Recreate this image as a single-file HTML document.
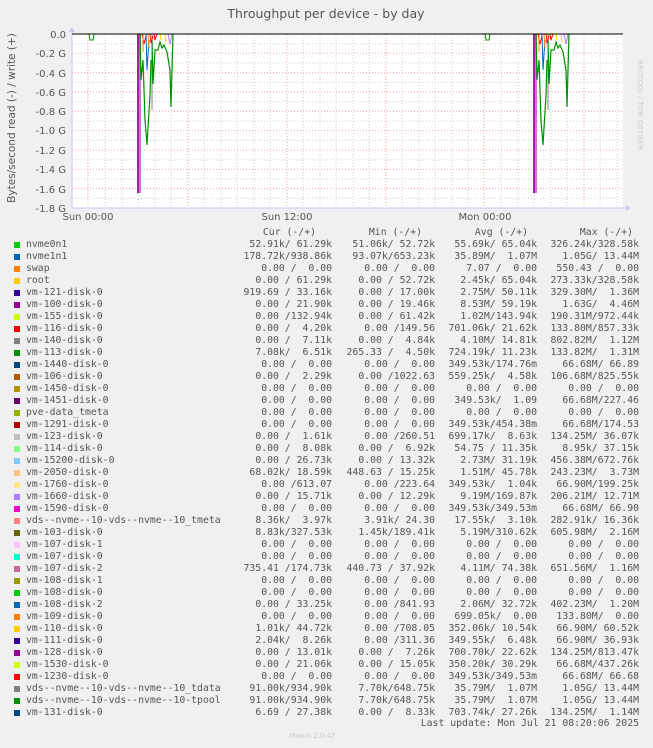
<!DOCTYPE html>
<html><head><meta charset="utf-8"><style>
*{margin:0;padding:0}
body{width:653px;height:748px;background:#f0f0f0;position:relative;overflow:hidden;font-family:"DejaVu Sans Mono","Liberation Mono",monospace;color:#555}
.t{position:absolute;font-size:9.8px;line-height:12px;white-space:pre}
.r{text-align:right}
.sq{position:absolute;width:6px;height:6px}
</style></head><body>
<svg width="653" height="230" style="position:absolute;left:0;top:0" font-family="DejaVu Sans, Liberation Sans, sans-serif">
<text x="326" y="18" text-anchor="middle" font-size="12.5" fill="#555">Throughput per device - by day</text>
<text transform="translate(15,118) rotate(-90)" text-anchor="middle" font-size="10.5" fill="#555">Bytes/second read (-) / write (+)</text>
<text transform="translate(638,105) rotate(90)" text-anchor="middle" font-size="7" fill="#ccc">RRDTOOL / TOBI OETIKER</text>
<rect x="72" y="34" width="551" height="174" fill="#fff"/>
<g stroke="#ccc" stroke-dasharray="1,2" stroke-width="1">
<path d="M105 34V208M122 34V208M138 34V208M155 34V208M171 34V208M204 34V208M221 34V208M237 34V208M254 34V208M270 34V208M303 34V208M320 34V208M336 34V208M353 34V208M369 34V208M402 34V208M419 34V208M435 34V208M452 34V208M468 34V208M501 34V208M518 34V208M534 34V208M551 34V208M567 34V208M600 34V208M617 34V208"/>
<path d="M72 43.7H623M72 63H623M72 82.3H623M72 101.7H623M72 121H623M72 140.3H623M72 159.7H623M72 179H623M72 198.3H623"/>
</g>
<g stroke="#f2a0a0" stroke-dasharray="1,2" stroke-width="1">
<path d="M88 34V208M188 34V208M287 34V208M386 34V208M484 34V208M584 34V208"/>
<path d="M72 53.3H623M72 72.7H623M72 92H623M72 111.3H623M72 130.7H623M72 150H623M72 169.3H623M72 188.7H623"/>
</g>
<g font-size="10" fill="#555" text-anchor="end">
<text x="66" y="38">0.0</text><text x="66" y="57">-0.2 G</text><text x="66" y="77">-0.4 G</text><text x="66" y="96">-0.6 G</text><text x="66" y="115">-0.8 G</text><text x="66" y="134">-1.0 G</text><text x="66" y="154">-1.2 G</text><text x="66" y="173">-1.4 G</text><text x="66" y="193">-1.6 G</text><text x="66" y="212">-1.8 G</text>
</g>
<g font-size="10" fill="#555" text-anchor="middle">
<text x="88" y="220">Sun 00:00</text><text x="287" y="220">Sun 12:00</text><text x="485" y="220">Mon 00:00</text>
</g>
<path d="M72 208H628M72 208V30" stroke="#c8c8f0" stroke-width="1"/>
<path d="M626 205L631 208L626 211Z M69 32L72 27L75 32Z" fill="#c8c8f0"/>
<g id="c1">
<path d="M137 34V193H141V34Z" fill="#cc77cc"/>
<path d="M138 34V193" stroke="#990099" stroke-width="1.5"/>
<path d="M140 34L141 80L143 60L145 120L147 145L150 95L151 60" stroke="#008f00" fill="none" stroke-width="1.2"/>
<path d="M146 34L147 70L149 40" stroke="#0066b3" fill="none"/>
<path d="M152 34L152 110" stroke="#808080" fill="none"/>
<path d="M152 40L153 84L155 50L158 50L160 42L162 48L164 45L167 52L170 70L171 107L173 34" stroke="#008f00" fill="none" stroke-width="1.2"/>
<path d="M142 34L144 44L146 36M150 34L151 43L153 36M154 34L155 40L157 34" stroke="#ff0000" fill="none"/>
<path d="M148 34L149 48M143 34L143 52" stroke="#ff8000" fill="none"/>
<path d="M168 34L170 44L172 34" stroke="#aa80ff" fill="none"/>
<path d="M160 34L161 40M165 34L166 42" stroke="#ffcc00" fill="none"/>
<path d="M89 34L90 40L93 40L94 34" stroke="#008f00" fill="none"/>
</g>
<use href="#c1" x="396"/>
<path d="M72 34H623" stroke="#000" stroke-width="1"/>
</svg>
<div class="t r" style="left:250px;width:66px;top:227px">Cur (-/+)</div>
<div class="t r" style="left:350px;width:72px;top:227px">Min (-/+)</div>
<div class="t r" style="left:450px;width:78px;top:227px">Avg (-/+)</div>
<div class="t r" style="left:550px;width:83px;top:227px">Max (-/+)</div>
<div id="leg"></div>
<div class="t r" style="left:300px;width:339px;top:718px">Last update: Mon Jul 21 08:20:06 2025</div>
<div style="position:absolute;left:0;width:625px;top:732px;text-align:center;font-family:'DejaVu Sans',sans-serif;font-size:7px;color:#ccc">Munin 2.0.42</div>
<script>
var cols=["00CC00","0066B3","FF8000","FFCC00","330099","990099","CCFF00","FF0000","808080","008F00","00487D","B35A00","B38F00","6B006B","8FB300","B30000","BEBEBE","80FF80","80C9FF","FFC080","FFE680","AA80FF","EE00CC","FF8080","666600","FFBFFF","00FFCC","CC6699","999900"];
var d=[
["nvme0n1","52.91k/ 61.29k","51.06k/ 52.72k","55.69k/ 65.04k","326.24k/328.58k"],
["nvme1n1","178.72k/938.86k","93.07k/653.23k","35.89M/  1.07M","1.05G/ 13.44M"],
["swap","0.00 /  0.00","0.00 /  0.00","7.07 /  0.00","550.43 /  0.00"],
["root","0.00 / 61.29k","0.00 / 52.72k","2.45k/ 65.04k","273.33k/328.58k"],
["vm-121-disk-0","919.69 / 33.16k","0.00 / 17.00k","2.75M/ 50.11k","329.30M/  1.36M"],
["vm-100-disk-0","0.00 / 21.90k","0.00 / 19.46k","8.53M/ 59.19k","1.63G/  4.46M"],
["vm-155-disk-0","0.00 /132.94k","0.00 / 61.42k","1.02M/143.94k","190.31M/972.44k"],
["vm-116-disk-0","0.00 /  4.20k","0.00 /149.56","701.06k/ 21.62k","133.80M/857.33k"],
["vm-140-disk-0","0.00 /  7.11k","0.00 /  4.84k","4.10M/ 14.81k","802.82M/  1.12M"],
["vm-113-disk-0","7.08k/  6.51k","265.33 /  4.50k","724.19k/ 11.23k","133.82M/  1.31M"],
["vm-1440-disk-0","0.00 /  0.00","0.00 /  0.00","349.53k/174.76m","66.68M/ 66.89"],
["vm-106-disk-0","0.00 /  2.29k","0.00 /1022.63","559.25k/  4.58k","106.68M/825.55k"],
["vm-1450-disk-0","0.00 /  0.00","0.00 /  0.00","0.00 /  0.00","0.00 /  0.00"],
["vm-1451-disk-0","0.00 /  0.00","0.00 /  0.00","349.53k/  1.09","66.68M/227.46"],
["pve-data_tmeta","0.00 /  0.00","0.00 /  0.00","0.00 /  0.00","0.00 /  0.00"],
["vm-1291-disk-0","0.00 /  0.00","0.00 /  0.00","349.53k/454.38m","66.68M/174.53"],
["vm-123-disk-0","0.00 /  1.61k","0.00 /260.51","699.17k/  8.63k","134.25M/ 36.07k"],
["vm-114-disk-0","0.00 /  8.08k","0.00 /  6.92k","54.75 / 11.35k","8.95k/ 37.15k"],
["vm-15200-disk-0","0.00 / 26.73k","0.00 / 13.32k","2.73M/ 31.19k","456.38M/672.76k"],
["vm-2050-disk-0","68.02k/ 18.59k","448.63 / 15.25k","1.51M/ 45.78k","243.23M/  3.73M"],
["vm-1760-disk-0","0.00 /613.07","0.00 /223.64","349.53k/  1.04k","66.90M/199.25k"],
["vm-1660-disk-0","0.00 / 15.71k","0.00 / 12.29k","9.19M/169.87k","206.21M/ 12.71M"],
["vm-1590-disk-0","0.00 /  0.00","0.00 /  0.00","349.53k/349.53m","66.68M/ 66.90"],
["vds--nvme--10-vds--nvme--10_tmeta","8.36k/  3.97k","3.91k/ 24.30","17.55k/  3.10k","282.91k/ 16.36k"],
["vm-103-disk-0","8.83k/327.53k","1.45k/189.41k","5.19M/310.62k","605.98M/  2.16M"],
["vm-107-disk-1","0.00 /  0.00","0.00 /  0.00","0.00 /  0.00","0.00 /  0.00"],
["vm-107-disk-0","0.00 /  0.00","0.00 /  0.00","0.00 /  0.00","0.00 /  0.00"],
["vm-107-disk-2","735.41 /174.73k","440.73 / 37.92k","4.11M/ 74.38k","651.56M/  1.16M"],
["vm-108-disk-1","0.00 /  0.00","0.00 /  0.00","0.00 /  0.00","0.00 /  0.00"],
["vm-108-disk-0","0.00 /  0.00","0.00 /  0.00","0.00 /  0.00","0.00 /  0.00"],
["vm-108-disk-2","0.00 / 33.25k","0.00 /841.93","2.06M/ 32.72k","402.23M/  1.20M"],
["vm-109-disk-0","0.00 /  0.00","0.00 /  0.00","699.05k/  0.00","133.80M/  0.00"],
["vm-110-disk-0","1.01k/ 44.72k","0.00 /708.05","352.06k/ 10.54k","66.90M/ 60.52k"],
["vm-111-disk-0","2.04k/  8.26k","0.00 /311.36","349.55k/  6.48k","66.90M/ 36.93k"],
["vm-128-disk-0","0.00 / 13.01k","0.00 /  7.26k","700.70k/ 22.62k","134.25M/813.47k"],
["vm-1530-disk-0","0.00 / 21.06k","0.00 / 15.05k","350.20k/ 30.29k","66.68M/437.26k"],
["vm-1230-disk-0","0.00 /  0.00","0.00 /  0.00","349.53k/349.53m","66.68M/ 66.68"],
["vds--nvme--10-vds--nvme--10_tdata","91.00k/934.90k","7.70k/648.75k","35.79M/  1.07M","1.05G/ 13.44M"],
["vds--nvme--10-vds--nvme--10-tpool","91.00k/934.90k","7.70k/648.75k","35.79M/  1.07M","1.05G/ 13.44M"],
["vm-131-disk-0","6.69 / 27.38k","0.00 /  8.33k","703.74k/ 27.26k","134.25M/  1.14M"]];
var h="",rights=[332,435,537,639];
for(var i=0;i<d.length;i++){var y=239+i*12;var r=d[i];
h+='<div class="sq" style="left:14px;top:'+(y+3)+'px;background:#'+cols[i%29]+'"></div>';
h+='<div class="t" style="left:26px;top:'+y+'px">'+r[0]+'</div>';
for(var j=0;j<4;j++){h+='<div class="t r" style="left:'+(rights[j]-110)+'px;width:110px;top:'+y+'px">'+r[j+1]+'</div>';}}
document.getElementById("leg").innerHTML=h;
</script>
</body></html>
